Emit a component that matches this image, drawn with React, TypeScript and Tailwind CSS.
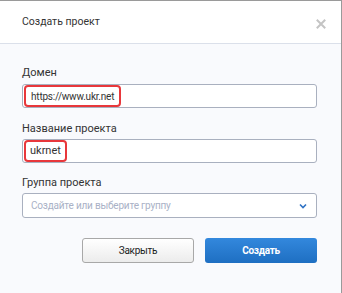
import React from "react";

export default function App() {
  return (
    <div
      className="w-[342px] h-[293px] flex flex-col border-t border-r border-[#9a9a9a] bg-[#f9fafd] text-[#333]"
      style={{ fontFamily: "Roboto, 'Noto Sans', sans-serif" }}
    >
      <div className="h-[43px] shrink-0 bg-white border-b border-[#dbe0ea] flex items-center justify-between pl-[22px] pr-[15px]">
        <span className="text-[10.5px] text-[#333]">Создать проект</span>
        <svg width="10" height="10" viewBox="0 0 10 10" className="mt-[4px]">
          <path d="M1.5 1.5L8.5 8.5M8.5 1.5L1.5 8.5" stroke="#c4c4c4" strokeWidth="2" strokeLinecap="square" />
        </svg>
      </div>
      <div className="flex flex-col px-[22px] pt-[22px] pr-[24px]">
        <label className="text-[11px] leading-[13px] mb-[5px]">Домен</label>
        <div className="h-[24px] border border-[#a9b0bf] rounded-[3px] bg-white flex items-center pl-[1px]">
          <div className="h-[22px] border-2 border-[#e8373b] rounded-[4px] flex items-center px-[5px] text-[10px] tracking-[-0.2px]">
            https://www.ukr.net
          </div>
        </div>
        <label className="text-[11px] leading-[13px] mt-[14px] mb-[4px]">Название проекта</label>
        <div className="h-[24px] border border-[#a9b0bf] rounded-[3px] bg-white flex items-center pl-[1px]">
          <div className="h-[22px] border-2 border-[#e8373b] rounded-[4px] flex items-center px-[4px] text-[11px]">
            ukrnet
          </div>
        </div>
        <label className="text-[11px] leading-[13px] mt-[13px] mb-[4px]">Группа проекта</label>
        <div className="h-[25px] border border-[#a9b0bf] rounded-[3px] bg-white flex items-center justify-between pl-[8px] pr-[9px]">
          <span className="text-[10px] tracking-[-0.2px] text-[#a9b1c6]">Создайте или выберите группу</span>
          <svg width="8" height="6" viewBox="0 0 8 6">
            <path d="M1 1.5L4 4.5L7 1.5" stroke="#2f72c4" strokeWidth="1.6" fill="none" />
          </svg>
        </div>
        <div className="flex justify-end gap-[11px] mt-[20px]">
          <button className="w-[112px] h-[25px] rounded-[3px] border border-[#a8a8a8] bg-gradient-to-b from-[#ffffff] to-[#ececec] text-[10px] tracking-[-0.3px] text-[#222]">
            Закрыть
          </button>
          <button className="w-[112px] h-[25px] rounded-[3px] bg-gradient-to-b from-[#3388dd] to-[#1e6fc2] text-[10px] tracking-[-0.3px] font-bold text-white">
            Создать
          </button>
        </div>
      </div>
    </div>
  );
}
